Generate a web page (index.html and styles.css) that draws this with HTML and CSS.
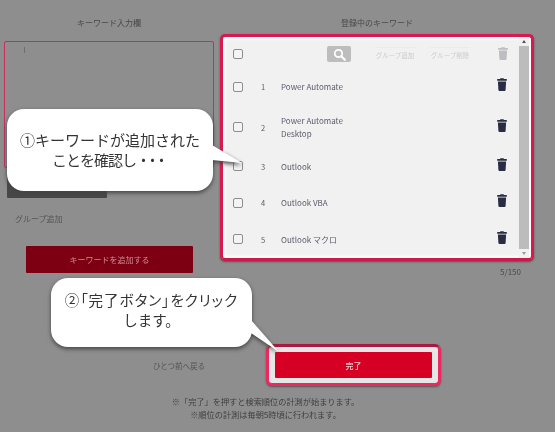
FILE: index.html
```html
<!DOCTYPE html>
<html lang="ja">
<head>
<meta charset="utf-8">
<title>キーワード登録</title>
<link rel="stylesheet" href="styles.css">
</head>
<body>
<svg class="defs" width="0" height="0" aria-hidden="true">
  <symbol id="trash" viewBox="0 0 10 13">
    <path d="M3.500 0.200h3l.5 .9h2.800v1.700H.2V1.100H3zM.9 3.500h8.200l-.5 8.500c0 .5-.4.9-1 .9H2.400c-.6 0-1-.4-1-.9z"/>
  </symbol>
</svg>
<div class="page">
  <div class="columns">
    <section class="left">
      <h2 class="title">キーワード入力欄</h2>
      <div class="input"><span class="caret"></span></div>
      <div class="dark-btn"></div>
      <p class="group-add">グループ追加</p>
      <button class="add-btn">キーワードを追加する</button>
    </section>
    <section class="right">
      <h2 class="title">登録中のキーワード</h2>
      <div class="panel">
        <div class="list">
          <div class="toolbar">
            <span class="check"></span>
            <span class="search">
              <svg width="13" height="13" viewBox="0 0 13 13"><circle cx="5.500" cy="5.500" r="3.700" fill="none" stroke="#fff" stroke-width="1.800"/><path d="M8.300 8.300l3.500 3.500" stroke="#fff" stroke-width="2.200" stroke-linecap="round"/></svg>
            </span>
            <span class="tool">グループ追加</span>
            <span class="tool">グループ削除</span>
            <svg class="trash off" width="10" height="13"><use href="#trash"/></svg>
          </div>
          <div class="row first"><span class="check"></span><span class="num">1</span><span class="name">Power Automate</span><svg class="trash" width="10" height="13"><use href="#trash"/></svg></div>
          <div class="row tall"><span class="check"></span><span class="num">2</span><span class="name">Power Automate<br>Desktop</span><svg class="trash" width="10" height="13"><use href="#trash"/></svg></div>
          <div class="row short"><span class="check"></span><span class="num">3</span><span class="name">Outlook</span><svg class="trash" width="10" height="13"><use href="#trash"/></svg></div>
          <div class="row"><span class="check"></span><span class="num">4</span><span class="name">Outlook VBA</span><svg class="trash" width="10" height="13"><use href="#trash"/></svg></div>
          <div class="row short"><span class="check"></span><span class="num">5</span><span class="name">Outlook マクロ</span><svg class="trash" width="10" height="13"><use href="#trash"/></svg></div>
        </div>
        <div class="scrollbar">
          <span class="arrow up"></span>
          <span class="thumb"></span>
          <span class="arrow down"></span>
        </div>
      </div>
      <p class="count">5/150</p>
    </section>
  </div>
  <div class="actions">
    <a class="back">ひとつ前へ戻る</a>
    <div class="ring"><button class="done">完了</button></div>
  </div>
  <div class="notes">
    <p>※「完了」を押すと検索順位の計測が始まります。</p>
    <p>※順位の計測は毎朝5時頃に行われます。</p>
  </div>

  <div class="callout one">
    <svg class="tail" width="32" height="20" viewBox="0 0 32 20"><polygon points="0,0 30,18 0,15" fill="#fff"/></svg>
    <p>①キーワードが追加された<br><span class="tight">ことを確認し<span class="dots">・・・</span></span></p>
  </div>
  <div class="callout two">
    <svg class="tail" width="30" height="34" viewBox="0 0 30 34"><polygon points="0,0 28,32 0,13" fill="#fff"/></svg>
    <p><span class="palt">②「完了ボタン」をクリック</span><br>します。</p>
  </div>
</div>
</body>
</html>
```
FILE: styles.css
```css
* { box-sizing: border-box; }
html, body { margin: 0; padding: 0; }
body { font-family: "Noto Sans CJK JP", "Noto Sans", sans-serif; background: #8e8e8e; }
p, h2 { margin: 0; font-weight: 400; }
.defs { position: absolute; }

.page {
  position: relative;
  width: 555px;
  height: 432px;
  overflow: hidden;
  background: #8e8e8e;
  color: #474747;
  filter: blur(0.35px);
}
.columns { display: flex; align-items: flex-start; gap: 6px; padding: 17px 21px 0 4px; }
.title { font-size: 8px; line-height: 11px; text-align: center; color: #484848; }

.left { width: 210px; flex: none; display: flex; flex-direction: column; }
.left .title { height: 24px; }
.input {
  height: 127px;
  border: 1px solid #c8305a;
  border-radius: 2px;
  padding: 5px 19px;
}
.caret { display: block; width: 1px; height: 6px; background: #6e6e6e; }
.dark-btn { width: 100px; height: 27px; margin: 3px 0 0 3px; background: #474747; border-radius: 1px; }
.group-add { margin: 15px 0 0 11px; font-size: 8px; line-height: 11px; color: #555; }
.add-btn {
  display: block;
  width: 167px;
  height: 27px;
  margin: 22px 0 0 22px;
  border: 0;
  border-radius: 1px;
  background: #7d0012;
  color: #c98d96;
  font: 8px "Noto Sans CJK JP", sans-serif;
}

.right { width: 314px; flex: none; }
.right .title { height: 17px; margin-top: 0; }
.panel {
  display: flex;
  height: 227px;
  border: 3px solid #d91a50;
  border-bottom-color: #c81a4c;
  border-radius: 5px;
  background: #f1f1f1;
  box-shadow: inset 0 0 3px 2px #fff, 0 1px 2px #555;
  padding: 0 2px 0 0;
}
.list { flex: 1; padding: 2px 0 0 10px; min-width: 0; }
.toolbar, .row { display: flex; align-items: center; }
.toolbar { height: 28px; padding-top: 2px; }
.row { height: 37px; font-size: 8px; color: #5a5a6a; }
.row.first { height: 39px; }
.row.tall { height: 42px; }
.row.short { height: 36px; }
.check {
  flex: none;
  width: 10px;
  height: 10px;
  border: 1px solid #8d8d8d;
  border-radius: 2px;
  background: #f4f4f4;
}
.num { width: 11px; margin-left: 18px; flex: none; font-size: 7.500px; }
.name { flex: 1; margin-left: 9px; line-height: 13px; }
.row .trash { margin-right: 12px; margin-top: -4px; }
.trash { flex: none; fill: #2a2c44; }
.trash.off { fill: #bdbdc2; margin-left: 28px; margin-top: -2px; }
.search {
  display: flex;
  align-items: center;
  justify-content: center;
  width: 24px;
  height: 16px;
  margin-left: 84px;
  border-radius: 2px;
  background: #bdbdbd;
}
.tool {
  width: 40px;
  margin-left: 15px;
  padding-top: 1px;
  border-top: 1px solid #ebebeb;
  font-size: 6.500px;
  line-height: 13px;
  text-align: center;
  color: #cbcbcb;
  white-space: nowrap;
}
.search + .tool { margin-left: 24px; }
.scrollbar { width: 10px; flex: none; display: flex; flex-direction: column; background: #f1f1f1; }
.thumb { flex: 1; background: #bcbcbc; }
.arrow { flex: none; height: 9px; display: flex; justify-content: center; align-items: center; }
.arrow::before { content: ""; border-left: 2.500px solid transparent; border-right: 2.500px solid transparent; }
.up::before { border-bottom: 3px solid #555; }
.down::before { border-top: 3px solid #999; }
.count { margin: 5px 13px 0 0; font-size: 8px; line-height: 11px; text-align: right; color: #4a4a4a; }

.actions { display: flex; align-items: center; margin-top: 67px; padding-left: 153px; }
.back { width: 113px; font-size: 7.500px; color: #555; }
.ring {
  width: 175px;
  height: 42px;
  padding: 5px 6px;
  border: 3px solid #ea2a5e;
  border-top-color: #a71a44;
  border-radius: 6px;
  background: #e6e6e6;
  box-shadow: 0 1px 2px #555;
}
.done {
  display: block;
  width: 100%;
  height: 100%;
  border: 0;
  border-radius: 1px;
  background: #d60024;
  color: #f6c9d2;
  font: 500 8px "Noto Sans CJK JP", sans-serif;
}
.notes { margin-top: 9px; padding-right: 24px; text-align: center; font-size: 8.200px; line-height: 13px; color: #3f3f3f; }

.callout {
  position: absolute;
  display: flex;
  align-items: center;
  justify-content: center;
  background: #fff;
  border-radius: 17px;
  color: #333;
  font-size: 15px;
  line-height: 20px;
  text-align: center;
  filter: drop-shadow(0 2px 2px #444);
}
.callout.one { left: 7px; top: 109px; width: 206px; height: 82px; }
.callout.two { left: 51px; top: 278px; width: 201px; height: 69px; font-size: 14.500px; line-height: 20px; padding-bottom: 5px; }
.tight { letter-spacing: -1px; }
.dots { letter-spacing: -6px; padding-right: 5px; }
.palt { font-feature-settings: "palt"; letter-spacing: 1px; }
.tail { position: absolute; left: 100%; margin-left: -1px; }
.one .tail { top: 36px; }
.two .tail { top: 42px; }
```
